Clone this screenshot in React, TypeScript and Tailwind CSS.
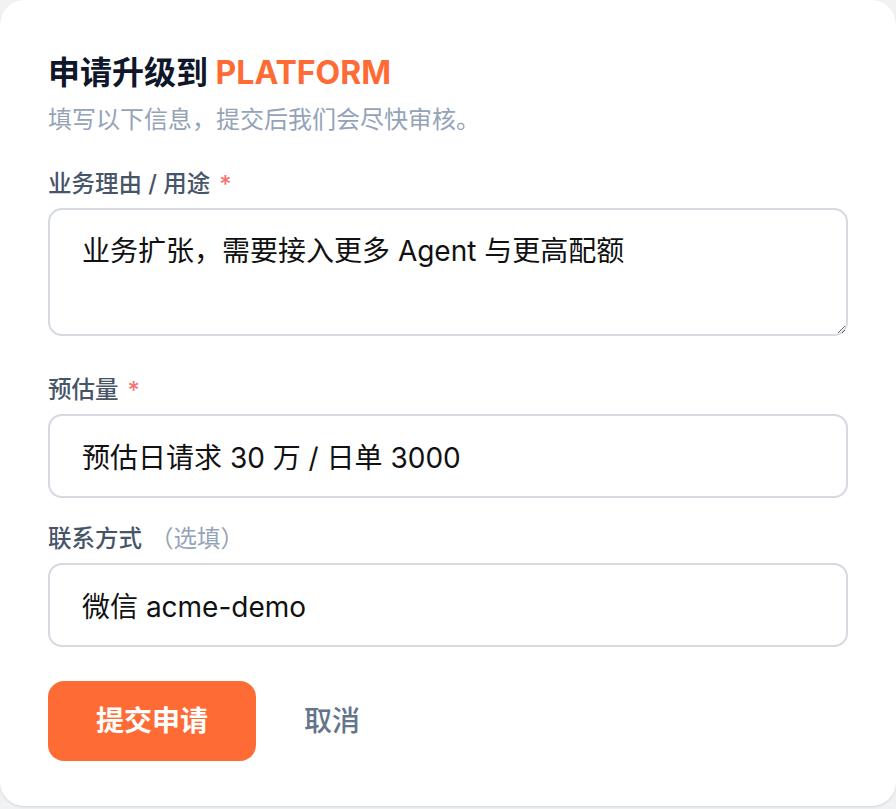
import React from "react";

export default function App() {
  return (
    <div className="min-h-screen bg-[#f1f2f4] font-['Inter','Noto_Sans_CJK_SC',sans-serif]">
      <div className="w-[896px] h-[806px] bg-white rounded-[24px] px-12 pt-[53px] shadow-sm">
        <h1 className="text-[32px] leading-[40px] font-bold text-[#0f172a]">
          申请升级到 <span className="text-[#ff6b35]">PLATFORM</span>
        </h1>
        <p className="mt-[11px] text-[24px] leading-[32px] text-[#94a3b8]">
          填写以下信息，提交后我们会尽快审核。
        </p>

        <form className="mt-[32px]">
          <label htmlFor="reason" className="block mb-2 text-[23.5px] leading-[32px] font-medium text-[#475569]">
            业务理由 / 用途<span className="ml-[9px] text-[#f87171]">*</span>
          </label>
          <textarea
            id="reason"
            defaultValue="业务扩张，需要接入更多 Agent 与更高配额"
            className="block w-full h-[128px] border-2 border-[#d5d9e0] rounded-[14px] px-8 pt-5 text-[28px] leading-[42px] text-[#111111] outline-none"
          />

          <label htmlFor="volume" className="block mt-[38px] mb-2 text-[23.5px] leading-[32px] font-medium text-[#475569]">
            预估量<span className="ml-[9px] text-[#f87171]">*</span>
          </label>
          <input
            id="volume"
            type="text"
            defaultValue="预估日请求 30 万 / 日单 3000"
            className="block w-full h-[84px] border-2 border-[#d5d9e0] rounded-[14px] px-8 text-[28px] text-[#111111] outline-none"
          />

          <label htmlFor="contact" className="block mt-[25px] mb-2 text-[23.5px] leading-[32px] font-medium text-[#475569]">
            联系方式<span className="ml-2 font-normal text-[#94a3b8]">（选填）</span>
          </label>
          <input
            id="contact"
            type="text"
            defaultValue="微信 acme-demo"
            className="block w-full h-[84px] border-2 border-[#d5d9e0] rounded-[14px] px-8 text-[28px] text-[#111111] outline-none"
          />

          <div className="mt-[34px] flex items-center gap-6">
            <button
              type="submit"
              className="w-[208px] h-[80px] rounded-[16px] bg-[#ff6b35] text-white text-[28px] font-semibold"
            >
              提交申请
            </button>
            <button type="button" className="px-6 h-[80px] text-[28px] font-medium text-[#64748b]">
              取消
            </button>
          </div>
        </form>
      </div>
    </div>
  );
}
